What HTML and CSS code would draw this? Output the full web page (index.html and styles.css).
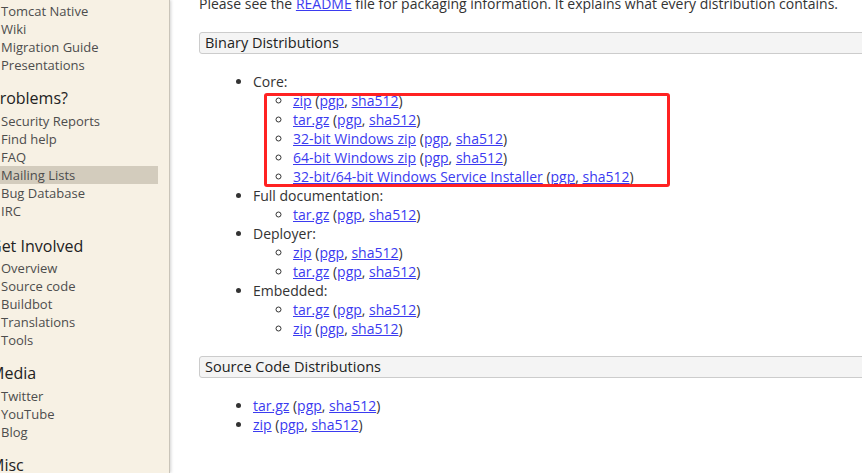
FILE: index.html
```html
<!DOCTYPE html>
<html lang="en">
<head>
<meta charset="utf-8">
<title>Apache Tomcat Downloads</title>
<link rel="stylesheet" href="styles.css">
</head>
<body>
<div class="page">
  <nav class="sidebar">
    <ul class="nav-list first">
      <li>Tomcat Native</li>
      <li>Wiki</li>
      <li>Migration Guide</li>
      <li>Presentations</li>
    </ul>
    <h2 class="nav-heading">Problems?</h2>
    <ul class="nav-list">
      <li>Security Reports</li>
      <li>Find help</li>
      <li>FAQ</li>
      <li class="active">Mailing Lists</li>
      <li>Bug Database</li>
      <li>IRC</li>
    </ul>
    <h2 class="nav-heading lower">Get Involved</h2>
    <ul class="nav-list">
      <li>Overview</li>
      <li>Source code</li>
      <li>Buildbot</li>
      <li>Translations</li>
      <li>Tools</li>
    </ul>
    <h2 class="nav-heading">Media</h2>
    <ul class="nav-list">
      <li>Twitter</li>
      <li>YouTube</li>
      <li>Blog</li>
    </ul>
    <h2 class="nav-heading">Misc</h2>
  </nav>
  <main class="content">
    <p class="intro">Please see the <a href="#">README</a> file for packaging information. It explains what every distribution contains.</p>
    <h3 class="section-title">Binary Distributions</h3>
    <ul class="dist-list">
      <li>Core:
        <ul>
          <li><a href="#">zip</a> (<a href="#">pgp</a>, <a href="#">sha512</a>)</li>
          <li><a href="#">tar.gz</a> (<a href="#">pgp</a>, <a href="#">sha512</a>)</li>
          <li><a href="#">32-bit Windows zip</a> (<a href="#">pgp</a>, <a href="#">sha512</a>)</li>
          <li><a href="#">64-bit Windows zip</a> (<a href="#">pgp</a>, <a href="#">sha512</a>)</li>
          <li><a href="#">32-bit/64-bit Windows Service Installer</a> (<a href="#">pgp</a>, <a href="#">sha512</a>)</li>
        </ul>
      </li>
      <li>Full documentation:
        <ul>
          <li><a href="#">tar.gz</a> (<a href="#">pgp</a>, <a href="#">sha512</a>)</li>
        </ul>
      </li>
      <li>Deployer:
        <ul>
          <li><a href="#">zip</a> (<a href="#">pgp</a>, <a href="#">sha512</a>)</li>
          <li><a href="#">tar.gz</a> (<a href="#">pgp</a>, <a href="#">sha512</a>)</li>
        </ul>
      </li>
      <li>Embedded:
        <ul>
          <li><a href="#">tar.gz</a> (<a href="#">pgp</a>, <a href="#">sha512</a>)</li>
          <li><a href="#">zip</a> (<a href="#">pgp</a>, <a href="#">sha512</a>)</li>
        </ul>
      </li>
    </ul>
    <h3 class="section-title source">Source Code Distributions</h3>
    <ul class="dist-list src">
      <li><a href="#">tar.gz</a> (<a href="#">pgp</a>, <a href="#">sha512</a>)</li>
      <li><a href="#">zip</a> (<a href="#">pgp</a>, <a href="#">sha512</a>)</li>
    </ul>
  </main>
  <div class="highlight-box"></div>
</div>
</body>
</html>
```

FILE: styles.css
```css
html, body {
  margin: 0;
  padding: 0;
  background: #fff;
  overflow: hidden;
}
body {
  font-family: "Open Sans", "Liberation Sans", sans-serif;
  width: 862px;
  height: 473px;
}
.page {
  position: relative;
  display: flex;
  height: 473px;
  overflow: hidden;
}
.sidebar {
  flex: none;
  width: 168px;
  margin-left: -10px;
  padding: 2px 11px 0 0;
  background: #f7f1e4;
  border-right: 1px solid #c9c4b9;
  box-shadow: 1px 0 3px rgba(0, 0, 0, 0.18);
  color: #4d4d4d;
  font-size: 13px;
}
.nav-list {
  list-style: none;
  margin: 0;
  padding: 0;
}
.nav-list li {
  padding-left: 11px;
  line-height: 18px;
  height: 18px;
  white-space: nowrap;
}
.nav-list li.active {
  background: #d3ccbd;
}
.nav-heading {
  margin: 13px 0 3px 0;
  font-size: 16px;
  line-height: 22px;
  font-weight: 400;
  color: #222;
  white-space: nowrap;
}
.nav-heading.lower {
  margin-top: 15px;
  margin-bottom: 2px;
}
.content {
  flex: none;
  width: 720px;
  margin-left: 29px;
  color: #333;
  font-size: 14px;
}
.content a {
  color: #3b3bf0;
  text-decoration: underline;
}
.intro {
  margin: -6px 0 0 0;
  line-height: 19px;
  white-space: nowrap;
}
.section-title {
  margin: 19px 0 0 0;
  padding: 0 5px;
  height: 20px;
  line-height: 20px;
  font-size: 14.5px;
  font-weight: 400;
  color: #222;
  background: #f4f4f4;
  border: 1px solid #ccc;
  border-radius: 3px;
}
.section-title.source {
  margin-top: 18px;
}
.dist-list {
  margin: 18px 0 0 0;
  padding-left: 54px;
  line-height: 19px;
  list-style: disc;
}
.dist-list ul {
  margin: 0;
  padding-left: 40px;
  list-style: circle;
}
.dist-list li {
  white-space: nowrap;
}
.highlight-box {
  position: absolute;
  left: 264px;
  top: 93px;
  width: 400px;
  height: 88px;
  border: 3px solid #ff2222;
  border-radius: 3px;
}
```
